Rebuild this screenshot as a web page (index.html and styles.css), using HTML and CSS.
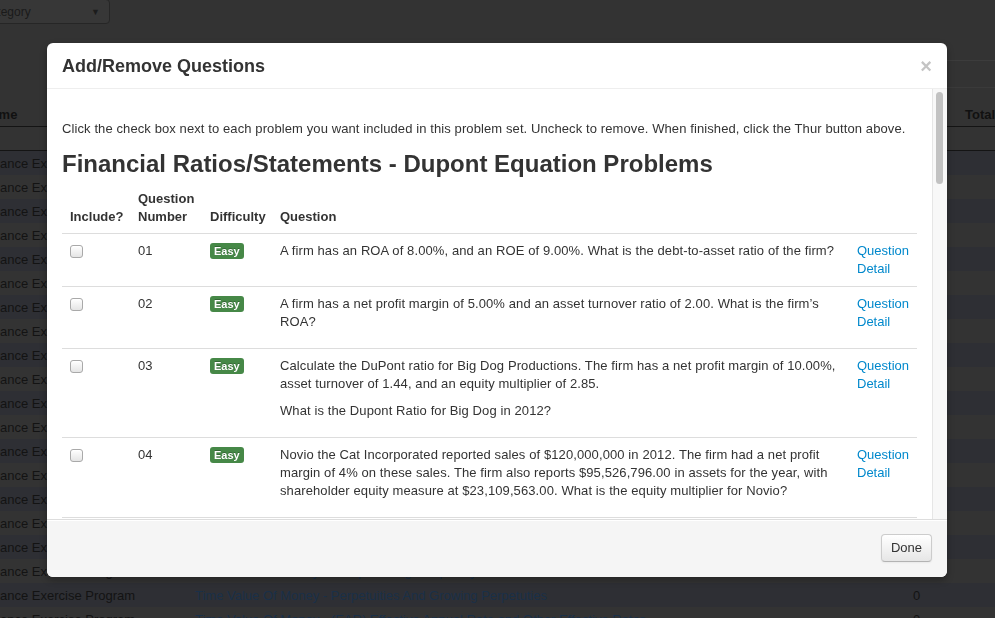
FILE: index.html
```html
<!DOCTYPE html>
<html lang="en">
<head>
<meta charset="utf-8">
<title>Add/Remove Questions</title>
<link rel="stylesheet" href="styles.css">
</head>
<body>
<div class="page">
  <div class="toolbar">
    <div class="select"><span class="select-text">Category</span><span class="caret">&#9660;</span></div>
  </div>
  <div class="tabs-row"><div class="tabs"></div></div>
  <table class="bgtable">
    <colgroup><col class="c-name"><col class="c-title"><col class="c-zero"><col class="c-total"></colgroup>
    <thead>
      <tr><th>Name</th><th>Problem Set</th><th></th><th>Total</th></tr>
    </thead>
    <tbody>
      <tr class="filter"><td></td><td></td><td></td><td></td></tr>
      <tr class="s"><td>Finance Exercise Program</td><td><a>Financial Ratios/Statements - Dupont Equation Problems</a></td><td>0</td><td></td></tr>
      <tr><td>Finance Exercise Program</td><td><a>Financial Ratios/Statements - Liquidity Ratios</a></td><td>0</td><td></td></tr>
      <tr class="s"><td>Finance Exercise Program</td><td><a>Financial Ratios/Statements - Leverage Ratios</a></td><td>0</td><td></td></tr>
      <tr><td>Finance Exercise Program</td><td><a>Financial Ratios/Statements - Profitability Ratios</a></td><td>0</td><td></td></tr>
      <tr class="s"><td>Finance Exercise Program</td><td><a>Financial Ratios/Statements - Market Value Ratios</a></td><td>0</td><td></td></tr>
      <tr><td>Finance Exercise Program</td><td><a>Financial Ratios/Statements - Cash Flow Statements</a></td><td>0</td><td></td></tr>
      <tr class="s"><td>Finance Exercise Program</td><td><a>Time Value Of Money - Future Value</a></td><td>0</td><td></td></tr>
      <tr><td>Finance Exercise Program</td><td><a>Time Value Of Money - Present Value</a></td><td>0</td><td></td></tr>
      <tr class="s"><td>Finance Exercise Program</td><td><a>Time Value Of Money - Interest Rates</a></td><td>0</td><td></td></tr>
      <tr><td>Finance Exercise Program</td><td><a>Time Value Of Money - Number Of Periods</a></td><td>0</td><td></td></tr>
      <tr class="s"><td>Finance Exercise Program</td><td><a>Time Value Of Money - Rule Of 72</a></td><td>0</td><td></td></tr>
      <tr><td>Finance Exercise Program</td><td><a>Time Value Of Money - Multiple Cash Flows</a></td><td>0</td><td></td></tr>
      <tr class="s"><td>Finance Exercise Program</td><td><a>Time Value Of Money - Annuities</a></td><td>0</td><td></td></tr>
      <tr><td>Finance Exercise Program</td><td><a>Time Value Of Money - Annuities Due</a></td><td>0</td><td></td></tr>
      <tr class="s"><td>Finance Exercise Program</td><td><a>Time Value Of Money - Loan Amortization</a></td><td>0</td><td></td></tr>
      <tr><td>Finance Exercise Program</td><td><a>Time Value Of Money - Annuity Payments</a></td><td>0</td><td></td></tr>
      <tr class="s"><td>Finance Exercise Program</td><td><a>Time Value Of Money - Growing Annuities</a></td><td>0</td><td></td></tr>
      <tr><td>Finance Exercise Program</td><td><a>Time Value Of Money - Compounding Frequency</a></td><td>0</td><td></td></tr>
      <tr class="s"><td>Finance Exercise Program</td><td><a>Time Value Of Money - Perpetuities And Growing Perpetuties</a></td><td>0</td><td></td></tr>
      <tr><td>Finance Exercise Program</td><td><a>Time Value Of Money - (EAR) Effective Annual Rate and Other Effective Rates</a></td><td>0</td><td></td></tr>
    </tbody>
  </table>
</div>

<div class="modal">
  <div class="modal-header">
    <h3 class="modal-title">Add/Remove Questions</h3>
    <span class="close">&times;</span>
  </div>
  <div class="modal-body">
    <div class="body-content">
      <p class="intro">Click the check box next to each problem you want included in this problem set. Uncheck to remove. When finished, click the Thur button above.</p>
      <h2 class="set-title">Financial Ratios/Statements - Dupont Equation Problems</h2>
      <table class="qtable">
        <colgroup><col class="q-inc"><col class="q-num"><col class="q-diff"><col><col class="q-det"></colgroup>
        <thead>
          <tr><th>Include?</th><th>Question Number</th><th>Difficulty</th><th>Question</th><th></th></tr>
        </thead>
        <tbody>
          <tr>
            <td><input type="checkbox" class="cb"></td><td>01</td><td><span class="label">Easy</span></td>
            <td><p>A firm has an ROA of 8.00%, and an ROE of 9.00%. What is the debt-to-asset ratio of the firm?</p></td>
            <td><a class="detail" href="#">Question Detail</a></td>
          </tr>
          <tr>
            <td><input type="checkbox" class="cb"></td><td>02</td><td><span class="label">Easy</span></td>
            <td><p>A firm has a net profit margin of 5.00% and an asset turnover ratio of 2.00. What is the firm’s ROA?</p></td>
            <td><a class="detail" href="#">Question Detail</a></td>
          </tr>
          <tr>
            <td><input type="checkbox" class="cb"></td><td>03</td><td><span class="label">Easy</span></td>
            <td><p>Calculate the DuPont ratio for Big Dog Productions. The firm has a net profit margin of 10.00%, asset turnover of 1.44, and an equity multiplier of 2.85.</p><p>What is the Dupont Ratio for Big Dog in 2012?</p></td>
            <td><a class="detail" href="#">Question Detail</a></td>
          </tr>
          <tr>
            <td><input type="checkbox" class="cb"></td><td>04</td><td><span class="label">Easy</span></td>
            <td><p>Novio the Cat Incorporated reported sales of $120,000,000 in 2012. The firm had a net profit margin of 4% on these sales. The firm also reports $95,526,796.00 in assets for the year, with shareholder equity measure at $23,109,563.00. What is the equity multiplier for Novio?</p></td>
            <td><a class="detail" href="#">Question Detail</a></td>
          </tr>
        </tbody>
      </table>
    </div>
    <div class="scrollbar"><div class="thumb"></div></div>
  </div>
  <div class="modal-footer">
    <button class="btn" type="button">Done</button>
  </div>
</div>
</body>
</html>
```
FILE: styles.css
```css
html, body {
  margin: 0;
  padding: 0;
}
body {
  background: #333333;
  font-family: "Liberation Sans", Arial, Helvetica, sans-serif;
  font-size: 13px;
  line-height: 18px;
  color: #333333;
  width: 995px;
  height: 618px;
  overflow: hidden;
}

/* ---------- dimmed page behind the dialog ---------- */
.page {
  width: 995px;
  height: 618px;
  overflow: hidden;
  color: #131313;
}
.toolbar {
  height: 60px;
  display: flex;
  align-items: flex-start;
}
.select {
  margin-left: -30px;
  margin-top: -1px;
  width: 140px;
  height: 25px;
  border: 1px solid #262626;
  border-radius: 4px;
  background: #373737;
  display: flex;
  align-items: center;
  justify-content: space-between;
  padding: 0 9px 0 11px;
  box-sizing: border-box;
  font-size: 12px;
  color: #1a1a1a;
}
.caret {
  font-size: 9px;
  color: #1c1c1c;
}
.tabs-row {
  display: flex;
  justify-content: flex-end;
}
.tabs {
  width: 160px;
  height: 26px;
  border-top: 1px solid #3c3c3c;
  border-bottom: 1px solid #3a3a3a;
}
.bgtable {
  margin-top: 12px;
  margin-left: -26px;
  width: 1063px;
  table-layout: fixed;
  border-collapse: collapse;
  font-size: 13px;
}
.c-name { width: 213px; }
.c-title { width: 710px; }
.c-zero { width: 60px; }
.c-total { width: 80px; }
.bgtable th {
  text-align: left;
  font-weight: bold;
  padding: 6px 8px 2px;
  line-height: 18px;
  color: #111111;
  border-bottom: 1px solid #141414;
}
.bgtable td {
  padding: 5px 8px 3px;
  line-height: 16px;
  height: 16px;
  white-space: nowrap;
  overflow: hidden;
}
.bgtable td:nth-child(3) { padding-left: 16px; }
.bgtable tr.filter td {
  height: 15px;
  padding: 4px 8px;
  border-bottom: 1px solid #141414;
}
.bgtable tr.s td { background: #2e2f34; }
.bgtable a { color: #1a3048; }

/* ---------- dialog ---------- */
.modal {
  position: fixed;
  left: 47px;
  top: 43px;
  width: 900px;
  background: #ffffff;
  border-radius: 6px;
  box-shadow: 0 3px 7px rgba(0, 0, 0, 0.3);
  overflow: hidden;
}
.modal-header {
  display: flex;
  justify-content: space-between;
  align-items: center;
  padding: 10px 15px 9px;
  border-bottom: 1px solid #eeeeee;
}
.modal-title {
  margin: 0;
  font-size: 18px;
  line-height: 26px;
  font-weight: bold;
  color: #333333;
}
.close {
  font-size: 20px;
  font-weight: bold;
  line-height: 20px;
  color: #c4c4c4;
}
.modal-body {
  height: 430px;
  display: flex;
}
.body-content {
  flex: 1;
  min-width: 0;
  overflow: hidden;
  padding: 15px;
  letter-spacing: 0.1px;
}
.scrollbar {
  width: 7px;
  padding: 3px 4px 3px 3px;
  background: #f8f8f8;
  border-left: 1px solid #e6e6e6;
}
.thumb {
  height: 92px;
  background: #c2c2c2;
  border-radius: 4px;
}
.intro {
  margin: 16px 0 8px;
}
.set-title {
  margin: 0;
  font-size: 24px;
  line-height: 36px;
  font-weight: bold;
  color: #333333;
  letter-spacing: 0;
}
.qtable {
  width: 855px;
  table-layout: fixed;
  border-collapse: collapse;
}
.q-inc { width: 68px; }
.q-num { width: 72px; }
.q-diff { width: 70px; }
.q-det { width: 68px; }
.qtable th {
  text-align: left;
  vertical-align: bottom;
  font-weight: bold;
  padding: 8px 8px 7px;
  line-height: 18px;
  letter-spacing: 0;
}
.qtable td {
  vertical-align: top;
  padding: 8px;
  line-height: 18px;
  border-top: 1px solid #dddddd;
}
.qtable tbody tr:last-child td {
  border-bottom: 1px solid #dddddd;
}
.qtable td p {
  margin: 0 0 9px;
}
.cb {
  appearance: none;
  -webkit-appearance: none;
  display: block;
  width: 13px;
  height: 13px;
  margin: 3px 0 0 0;
  border: 1px solid #a9a9a9;
  border-radius: 3px;
  background: linear-gradient(#ffffff, #e4e4e4);
  box-sizing: border-box;
  box-shadow: inset 0 1px 1px rgba(255, 255, 255, 0.8);
}
.label {
  display: inline-block;
  padding: 1px 4px;
  font-size: 11px;
  font-weight: bold;
  line-height: 14px;
  letter-spacing: 0;
  color: #ffffff;
  background: #468847;
  border-radius: 3px;
  text-shadow: 0 -1px 0 rgba(0, 0, 0, 0.25);
  vertical-align: baseline;
}
.detail {
  color: #0088cc;
  text-decoration: none;
  letter-spacing: 0;
}
.modal-footer {
  padding: 14px 15px 15px;
  border-top: 1px solid #dddddd;
  background: #f5f5f5;
  text-align: right;
  box-shadow: inset 0 1px 0 #ffffff;
}
.btn {
  font-family: "Liberation Sans", Arial, Helvetica, sans-serif;
  font-size: 13px;
  line-height: 18px;
  padding: 4px 9px;
  color: #333333;
  background: linear-gradient(#ffffff, #e6e6e6);
  border: 1px solid #cccccc;
  border-bottom-color: #b3b3b3;
  border-radius: 4px;
  box-shadow: inset 0 1px 0 rgba(255, 255, 255, 0.2), 0 1px 2px rgba(0, 0, 0, 0.05);
  margin: 0;
}
```
